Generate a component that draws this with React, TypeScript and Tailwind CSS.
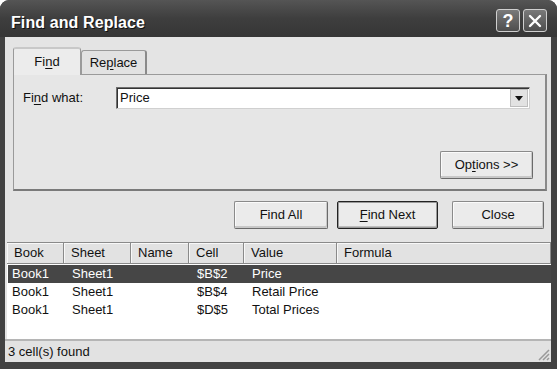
import React from "react";

const rows = [
  { book: "Book1", sheet: "Sheet1", name: "", cell: "$B$2", value: "Price", formula: "" },
  { book: "Book1", sheet: "Sheet1", name: "", cell: "$B$4", value: "Retail Price", formula: "" },
  { book: "Book1", sheet: "Sheet1", name: "", cell: "$D$5", value: "Total Prices", formula: "" },
];

const cols = [
  { label: "Book", w: "w-[57px]" },
  { label: "Sheet", w: "w-[67px]" },
  { label: "Name", w: "w-[58px]" },
  { label: "Cell", w: "w-[55px]" },
  { label: "Value", w: "w-[93px]" },
  { label: "Formula", w: "flex-1" },
];

function Btn({ children, className = "" }: { children: React.ReactNode; className?: string }) {
  return (
    <div
      className={`h-[28px] flex items-center justify-center bg-[#ebebeb] border border-[#8a8a8a] border-b-[#6a6a6a] border-r-[#6a6a6a] rounded-[2px] shadow-[inset_-1px_-2px_0_#c8c8c8,inset_1px_1px_0_#fafafa] text-[13px] text-[#111] ${className}`}
    >
      {children}
    </div>
  );
}

export default function App() {
  return (
    <div
      className="w-[557px] h-[369px] bg-[#424242] rounded-t-[9px] flex flex-col px-[5px] pb-[7px] pr-[6px] overflow-hidden"
      style={{ fontFamily: '"Liberation Sans", Arial, sans-serif' }}
    >
      {/* title bar */}
      <div className="h-[37px] shrink-0 flex items-center justify-between bg-gradient-to-b from-[#555] via-[#3e3e3e] to-[#363636] -mx-[5px] -mr-[6px] pl-[11px] pr-[10px]">
        <span className="text-white font-bold text-[16px] tracking-[0.1px] [text-shadow:1px_1px_0_#111] mt-[8px]">
          Find and Replace
        </span>
        <div className="flex gap-[3px] mt-[4px]">
          <div className="w-[24px] h-[23px] rounded-[3px] border border-[#cfcfcf] bg-gradient-to-b from-[#7a7a7a] to-[#4e4e4e] flex items-center justify-center text-white font-bold text-[18px] leading-none">
            ?
          </div>
          <div className="w-[24px] h-[23px] rounded-[3px] border border-[#cfcfcf] bg-gradient-to-b from-[#7a7a7a] to-[#4e4e4e] flex items-center justify-center">
            <svg width="14" height="14" viewBox="0 0 14 14">
              <path d="M2 2 L12 12 M12 2 L2 12" stroke="#fff" strokeWidth="2.4" strokeLinecap="round" />
            </svg>
          </div>
        </div>
      </div>

      {/* content */}
      <div className="flex-1 bg-[#e4e4e4] flex flex-col text-[13px] text-[#111]">
        {/* tabs */}
        <div className="pl-[8px] pr-[4px] pt-[10px]">
          <div className="flex items-end h-[27px]">
            <div className="relative z-10 w-[68px] h-[28px] -mb-[1px] bg-[#ececec] border border-[#9a9a9a] border-b-0 rounded-t-[3px] border-t-2 border-t-[#c8c8c8] flex items-center justify-center">
              <span>
                Fi<span className="underline underline-offset-2">n</span>d
              </span>
            </div>
            <div className="w-[66px] h-[24px] bg-[#e2e2e2] border border-[#9a9a9a] border-b-0 border-r-2 border-r-[#8a8a8a] rounded-t-[3px] flex items-center justify-center">
              <span>
                Re<span className="underline underline-offset-2">p</span>lace
              </span>
            </div>
          </div>
          <div className="h-[117px] bg-[#e6e6e6] border border-[#9a9a9a] border-r-2 border-r-[#8a8a8a] border-b-2 border-b-[#7a7a7a] flex flex-col">
            <div className="flex items-center mt-[12px] pl-[9px]">
              <span className="w-[93px]">
                Fi<span className="underline underline-offset-2">n</span>d what:
              </span>
              <div className="w-[414px] h-[22px] bg-white border border-[#6f6f6f] border-b-[#d0d0d0] border-r-[#d0d0d0] shadow-[inset_1px_1px_0_#333] flex items-center justify-between">
                <span className="pl-[3px]">Price</span>
                <div className="w-[18px] h-[18px] mr-[1px] bg-[#e2e2e2] border border-[#bdbdbd] flex items-center justify-center">
                  <svg width="8" height="5" viewBox="0 0 8 5">
                    <path d="M0 0 H8 L4 5 Z" fill="#111" />
                  </svg>
                </div>
              </div>
            </div>
            <div className="flex-1" />
            <div className="flex justify-end pr-[12px] pb-[10px]">
              <Btn className="w-[93px]">
                <span>
                  Op<span className="underline underline-offset-2">t</span>ions &gt;&gt;
                </span>
              </Btn>
            </div>
          </div>
        </div>

        {/* action buttons */}
        <div className="flex justify-end mt-[10px] pr-[7px]">
          <Btn className="w-[94px]">Find All</Btn>
          <Btn className="w-[101px] ml-[9px] border-[#222] border-b-[#222] border-r-[#222] shadow-[inset_0_0_0_1px_#9a9a9a,inset_-1px_-2px_0_#bdbdbd]">
            <span>
              <span className="underline underline-offset-2">F</span>ind Next
            </span>
          </Btn>
          <Btn className="w-[92px] ml-[14px]">Close</Btn>
        </div>

        {/* results list */}
        <div className="mt-[13px] ml-[2px] flex-1 flex flex-col bg-white border-t border-[#8a8a8a]">
          <div className="flex h-[21px] bg-[#e2e2e2] border-b border-[#8a8a8a]">
            {cols.map((c) => (
              <div
                key={c.label}
                className={`${c.w} h-full flex items-center pl-[7px] border-r border-[#8a8a8a] shadow-[inset_1px_1px_0_#f8f8f8]`}
              >
                {c.label}
              </div>
            ))}
          </div>
          <div className="flex-1 pt-[1px] pl-[1px]">
            {rows.map((r, i) => (
              <div
                key={i}
                className={`flex h-[18px] items-center ${i === 0 ? "bg-[#464646] text-white" : ""}`}
              >
                <div className="w-[57px] pl-[4px]">{r.book}</div>
                <div className="w-[67px] pl-[7px]">{r.sheet}</div>
                <div className="w-[58px] pl-[7px]">{r.name}</div>
                <div className="w-[55px] pl-[7px]">{r.cell}</div>
                <div className="w-[93px] pl-[7px]">{r.value}</div>
                <div className="flex-1 pl-[7px]">{r.formula}</div>
              </div>
            ))}
          </div>
        </div>

        {/* status bar */}
        <div className="h-[23px] shrink-0 border-t-2 border-[#b5b5b5] bg-[#e2e2e2] flex items-center justify-between pl-[3px]">
          <span>3 cell(s) found</span>
          <svg width="13" height="13" viewBox="0 0 13 13" className="self-end mb-[1px] mr-[1px]">
            <path d="M12 2 L2 12 M12 6 L6 12 M12 10 L10 12" stroke="#999" strokeWidth="1.5" />
          </svg>
        </div>
      </div>
    </div>
  );
}
